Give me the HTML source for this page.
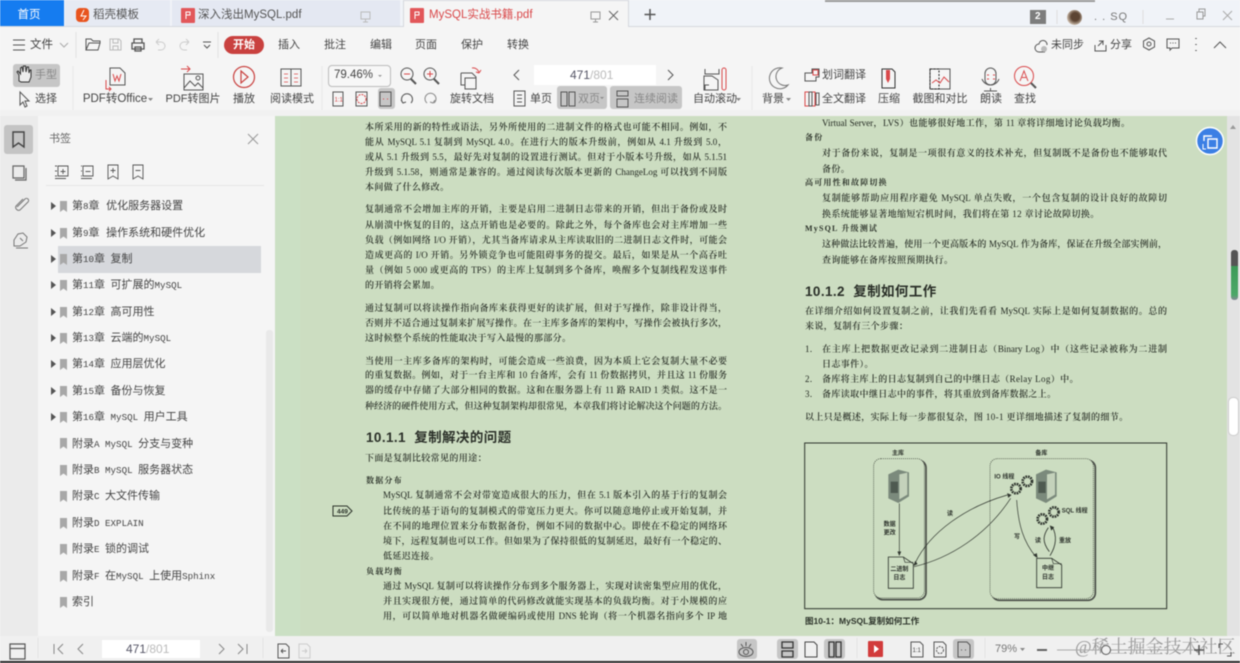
<!DOCTYPE html>
<html lang="zh-CN"><head><meta charset="utf-8"><title>MySQL实战书籍.pdf</title>
<style>
html,body{margin:0;padding:0;background:#f5f5f5}
#r{position:relative;width:1240px;height:663px;overflow:hidden;background:#f5f5f5;font-family:"Liberation Sans","Noto Sans CJK SC",sans-serif;color:#444;filter:blur(.45px)}
#r div{position:absolute;box-sizing:border-box}
.t{white-space:nowrap;font-size:11px;line-height:14px;color:#444}
.c{transform:translateX(-50%)}
.tb{font-size:11.5px;line-height:16px;top:7px;color:#555}
.m{font-size:11px;top:38px;color:#444}
.sel{background:#c6c6c6;border-radius:3px}
.i{left:72px;font-family:"Liberation Mono","Noto Sans CJK SC",monospace;font-size:11px;line-height:16px;color:#444;white-space:nowrap}
.i b{font-weight:400;font-size:9.2px}
.l{font-family:"Liberation Serif","Noto Serif CJK SC",serif;font-size:9px;line-height:14px;height:14px;overflow:hidden;color:#2c332a;font-weight:600;text-align:justify;text-align-last:justify;text-justify:inter-character}
.l i{font-style:normal;font-weight:400;color:#1f251e}
.a{left:365px;width:362px}.b{left:383px;width:344px}
.d{left:805px;width:362px}.e{left:822px;width:345px}
.n{text-align:left;text-align-last:left;letter-spacing:.38px;white-space:nowrap}
.h{font-family:"Liberation Sans","Noto Sans CJK SC",sans-serif;font-size:13.5px;line-height:18px;font-weight:700;color:#2a2f28;white-space:nowrap;letter-spacing:.4px}
.s{font-family:"Liberation Serif","Noto Serif CJK SC",serif;font-size:8px;line-height:12px;font-weight:700;color:#2c332a;white-space:nowrap;letter-spacing:1.2px}
svg{position:absolute;left:0;top:0}
</style></head><body><div id="r">

<div style="left:0;top:0;width:1240px;height:27px;background:#f0f3f8;border-bottom:1px solid #d5d8de"></div>
<div style="left:0;top:0;width:64px;height:26px;background:#157cf0"></div>
<div style="left:65px;top:0;width:105px;height:26px;background:#e6eaf3"></div>
<div style="left:172px;top:0;width:228px;height:26px;background:#e4e8f2"></div>
<div style="left:403px;top:0;width:226px;height:27px;background:#f5f5f5;border:1px solid #d5d8de;border-bottom:0"></div>
<div style="left:825px;top:0;width:270px;height:1.500px;background:#999"></div>
<div class="t c tb" style="left:29px;color:#fff">首页</div>
<div class="t tb" style="left:93px">稻壳模板</div>
<div class="t tb" style="left:198px">深入浅出MySQL.pdf</div>
<div class="t tb" style="left:429px;color:#d9484a">MySQL实战书籍.pdf</div>
<div style="left:1030px;top:10px;width:16px;height:14px;background:#7d7d7d"></div>
<div class="t" style="left:1035px;top:10px;color:#fff;font-size:10px;font-weight:700">2</div>
<div style="left:1067px;top:10px;width:15px;height:15px;border-radius:50%;background:radial-gradient(circle at 55% 45%,#5c4433 0 35%,#c9b9a8 70%)"></div>
<div class="t" style="left:1094px;top:10px;font-size:11px;color:#777;letter-spacing:1px">. . SQ</div>

<div style="left:224px;top:36px;width:40px;height:18px;border-radius:9px;background:#c9413f"></div>
<div class="t c m" style="left:244px;color:#fff;font-weight:700">开始</div>
<div class="t m" style="left:30px;font-size:11.5px">文件</div>
<div class="t c m" style="left:289px">插入</div>
<div class="t c m" style="left:335px">批注</div>
<div class="t c m" style="left:381px">编辑</div>
<div class="t c m" style="left:426px">页面</div>
<div class="t c m" style="left:472px">保护</div>
<div class="t c m" style="left:518px">转换</div>
<div class="t m" style="left:1051px">未同步</div>
<div class="t m" style="left:1110px">分享</div>

<div class="sel" style="left:13px;top:64px;width:47px;height:23px"></div>
<div class="t" style="left:35px;top:68px;color:#888">手型</div>
<div class="t" style="left:35px;top:92px">选择</div>
<div class="t c" style="left:115px;top:92px;font-size:11.5px">PDF转Office</div>
<div class="t c" style="left:193px;top:92px">PDF转图片</div>
<div class="t c" style="left:244px;top:92px">播放</div>
<div class="t c" style="left:292px;top:92px">阅读模式</div>
<div style="left:328px;top:65px;width:63px;height:22px;border:1px solid #bbb;border-radius:4px;background:#f7f7f7"></div>
<div class="t" style="left:334px;top:68px;font-size:11.5px">79.46%</div>
<div class="sel" style="left:378px;top:88px;width:17px;height:21px"></div>
<div class="t c" style="left:472px;top:92px">旋转文档</div>
<div style="left:534px;top:65px;width:122px;height:20px;background:#fff"></div>
<div class="t" style="left:570px;top:68px;font-size:12px"><span style="color:#556">471</span><span style="color:#bbb">/801</span></div>
<div class="t" style="left:530px;top:92px">单页</div>
<div class="sel" style="left:557px;top:86px;width:50px;height:23px"></div>
<div class="t" style="left:578px;top:92px;color:#888">双页</div>
<div class="sel" style="left:610px;top:86px;width:72px;height:23px"></div>
<div class="t" style="left:634px;top:92px;color:#888">连续阅读</div>
<div class="t c" style="left:715px;top:92px">自动滚动</div>
<div class="t" style="left:762px;top:92px">背景</div>
<div class="t" style="left:822px;top:68px">划词翻译</div>
<div class="t" style="left:822px;top:92px">全文翻译</div>
<div class="t c" style="left:889px;top:92px">压缩</div>
<div class="t c" style="left:940px;top:92px">截图和对比</div>
<div class="t c" style="left:991px;top:92px">朗读</div>
<div class="t c" style="left:1025px;top:92px">查找</div>

<div style="left:0;top:110px;width:1240px;height:6px;background:#f1f1f1"></div>
<div style="left:0;top:116px;width:38px;height:520px;background:#ebebeb"></div>
<div style="left:38px;top:116px;width:237px;height:520px;background:#f5f5f5"></div>
<div class="sel" style="left:4px;top:125px;width:29px;height:29px;background:#c4c4c4"></div>
<div class="t" style="left:49px;top:132px;font-size:11px;color:#666">书签</div>
<div style="left:46px;top:185px;width:218px;height:1px;background:#e6e6e6"></div>
<div style="left:58px;top:246px;width:203px;height:27px;background:#d6d8dc"></div>
<div style="left:266px;top:330px;width:7px;height:302px;background:#e9e9e9;border-radius:3px"></div>

<div class="i" style="top:199px">第<b>8</b>章 优化服务器设置</div>
<div class="i" style="top:226px">第<b>9</b>章 操作系统和硬件优化</div>
<div class="i" style="top:252px">第<b>10</b>章<b> </b>复制</div>
<div class="i" style="top:278px">第<b>11</b>章<b> </b>可扩展的<b>MySQL</b></div>
<div class="i" style="top:305px">第<b>12</b>章<b> </b>高可用性</div>
<div class="i" style="top:331px">第<b>13</b>章<b> </b>云端的<b>MySQL</b></div>
<div class="i" style="top:357px">第<b>14</b>章<b> </b>应用层优化</div>
<div class="i" style="top:384px">第<b>15</b>章<b> </b>备份与恢复</div>
<div class="i" style="top:410px">第<b>16</b>章<b> MySQL </b>用户工具</div>
<div class="i" style="top:437px">附录<b>A MySQL </b>分支与变种</div>
<div class="i" style="top:463px">附录<b>B MySQL </b>服务器状态</div>
<div class="i" style="top:489px">附录<b>C </b>大文件传输</div>
<div class="i" style="top:516px">附录<b>D EXPLAIN</b></div>
<div class="i" style="top:542px">附录<b>E </b>锁的调试</div>
<div class="i" style="top:569px">附录<b>F </b>在<b>MySQL </b>上使用<b>Sphinx</b></div>
<div class="i" style="top:595px">索引</div>

<div style="left:275px;top:116px;width:952px;height:520px;background:#ccddc1"></div>
<div style="left:275px;top:116px;width:25px;height:520px;background:#cbe0c4"></div>
<div style="left:1227px;top:116px;width:13px;height:520px;background:#e3e3e3"></div>
<div style="left:1231px;top:250px;width:7px;height:50px;border-radius:3px;background:linear-gradient(#555 0 32%,#3d9a58 32%,#4ca868 90%,#889 100%)"></div>
<div style="left:1228px;top:397px;width:11px;height:39px;border-radius:5px;background:#fff;border:1px solid #ccc"></div>

<div class="l a" style="top:120px">本所采用的新的特性或语法，另外所使用的二进制文件的格式也可能不相同。例如，不</div>
<div class="l a" style="top:135px">能从 <i>MySQL 5.1</i> 复制到 <i>MySQL 4.0</i>。在进行大的版本升级前，例如从 <i>4.1</i> 升级到 <i>5.0</i>，</div>
<div class="l a" style="top:150px">或从 <i>5.1</i> 升级到 <i>5.5</i>，最好先对复制的设置进行测试。但对于小版本号升级，如从 <i>5.1.51</i></div>
<div class="l a" style="top:165px">升级到 <i>5.1.58</i>，则通常是兼容的。通过阅读每次版本更新的 <i>ChangeLog</i> 可以找到不同版</div>
<div class="l a n" style="top:180px">本间做了什么修改。</div>
<div class="l a" style="top:202px">复制通常不会增加主库的开销，主要是启用二进制日志带来的开销，但出于备份或及时</div>
<div class="l a" style="top:218px">从崩溃中恢复的目的，这点开销也是必要的。除此之外，每个备库也会对主库增加一些</div>
<div class="l a" style="top:233px">负载（例如网络 <i>I/O</i> 开销），尤其当备库请求从主库读取旧的二进制日志文件时，可能会</div>
<div class="l a" style="top:248px">造成更高的 <i>I/O</i> 开销。另外锁竞争也可能阻碍事务的提交。最后，如果是从一个高吞吐</div>
<div class="l a" style="top:263px">量（例如 <i>5 000</i> 或更高的 <i>TPS</i>）的主库上复制到多个备库，唤醒多个复制线程发送事件</div>
<div class="l a n" style="top:278px">的开销将会累加。</div>
<div class="l a" style="top:301px">通过复制可以将读操作指向备库来获得更好的读扩展，但对于写操作，除非设计得当，</div>
<div class="l a" style="top:316px">否则并不适合通过复制来扩展写操作。在一主库多备库的架构中，写操作会被执行多次，</div>
<div class="l a n" style="top:331px">这时候整个系统的性能取决于写入最慢的那部分。</div>
<div class="l a" style="top:354px">当使用一主库多备库的架构时，可能会造成一些浪费，因为本质上它会复制大量不必要</div>
<div class="l a" style="top:368px">的重复数据。例如，对于一台主库和 <i>10</i> 台备库，会有 <i>11</i> 份数据拷贝，并且这 <i>11</i> 份服务</div>
<div class="l a" style="top:383px">器的缓存中存储了大部分相同的数据。这和在服务器上有 <i>11</i> 路 <i>RAID 1</i> 类似。这不是一</div>
<div class="l a" style="top:399px">种经济的硬件使用方式，但这种复制架构却很常见，本章我们将讨论解决这个问题的方法。</div>
<div class="h" style="left:366px;top:429px">10.1.1&nbsp; 复制解决的问题</div>
<div class="l a n" style="top:451px">下面是复制比较常见的用途：</div>
<div class="s" style="left:366px;top:475px">数据分布</div>
<div class="l b" style="top:488px"><i>MySQL</i> 复制通常不会对带宽造成很大的压力，但在 <i>5.1</i> 版本引入的基于行的复制会</div>
<div class="l b" style="top:504px">比传统的基于语句的复制模式的带宽压力更大。你可以随意地停止或开始复制，并</div>
<div class="l b" style="top:519px">在不同的地理位置来分布数据备份，例如不同的数据中心。即使在不稳定的网络环</div>
<div class="l b" style="top:534px">境下，远程复制也可以工作。但如果为了保持很低的复制延迟，最好有一个稳定的、</div>
<div class="l b n" style="top:549px">低延迟连接。</div>
<div class="s" style="left:366px;top:566px">负载均衡</div>
<div class="l b" style="top:579px">通过 <i>MySQL</i> 复制可以将读操作分布到多个服务器上，实现对读密集型应用的优化，</div>
<div class="l b" style="top:594px">并且实现很方便，通过简单的代码修改就能实现基本的负载均衡。对于小规模的应</div>
<div class="l b" style="top:609px">用，可以简单地对机器名做硬编码或使用 <i>DNS</i> 轮询（将一个机器名指向多个 <i>IP</i> 地</div>

<div class="l e" style="top:116px;width:308px"><i>Virtual Server</i>，<i>LVS</i>）也能够很好地工作，第 <i>11</i> 章将详细地讨论负载均衡。</div>
<div class="s" style="left:805px;top:132px">备份</div>
<div class="l e" style="top:146px">对于备份来说，复制是一项很有意义的技术补充，但复制既不是备份也不能够取代</div>
<div class="l e n" style="top:162px">备份。</div>
<div class="s" style="left:805px;top:177px">高可用性和故障切换</div>
<div class="l e" style="top:191px">复制能够帮助应用程序避免 <i>MySQL</i> 单点失败，一个包含复制的设计良好的故障切</div>
<div class="l e n" style="top:207px">换系统能够显著地缩短宕机时间，我们将在第 <i>12</i> 章讨论故障切换。</div>
<div class="s" style="left:805px;top:223px">MySQL 升级测试</div>
<div class="l e" style="top:237px">这种做法比较普遍，使用一个更高版本的 <i>MySQL</i> 作为备库，保证在升级全部实例前，</div>
<div class="l e n" style="top:253px">查询能够在备库按照预期执行。</div>
<div class="h" style="left:805px;top:283px">10.1.2&nbsp; 复制如何工作</div>
<div class="l d" style="top:304px">在详细介绍如何设置复制之前，让我们先看看 <i>MySQL</i> 实际上是如何复制数据的。总的</div>
<div class="l d n" style="top:319px">来说，复制有三个步骤：</div>
<div class="l d n" style="top:342px"><i>1.</i></div>
<div class="l e" style="top:342px">在主库上把数据更改记录到二进制日志（<i>Binary Log</i>）中（这些记录被称为二进制</div>
<div class="l e n" style="top:357px">日志事件）。</div>
<div class="l d n" style="top:372px"><i>2.</i></div>
<div class="l e n" style="top:372px">备库将主库上的日志复制到自己的中继日志（<i>Relay Log</i>）中。</div>
<div class="l d n" style="top:387px"><i>3.</i></div>
<div class="l e n" style="top:387px">备库读取中继日志中的事件，将其重放到备库数据之上。</div>
<div class="l d n" style="top:410px">以上只是概述，实际上每一步都很复杂，图 <i>10-1</i> 更详细地描述了复制的细节。</div>
<div class="t" style="left:805px;top:614px;font-size:8.5px;font-weight:700;color:#2c332a">图10-1：MySQL复制如何工作</div>

<div style="left:0;top:636px;width:1240px;height:25px;background:#f0f0f0"></div>
<div style="left:0;top:661px;width:1240px;height:2px;background:#2a2a2a"></div>
<div style="left:102px;top:640px;width:98px;height:18px;background:#fff"></div>
<div class="t" style="left:126px;top:642px;font-size:12px"><span style="color:#556">471</span><span style="color:#bbb">/801</span></div>
<div class="sel" style="left:737px;top:639px;width:20px;height:20px"></div>
<div class="sel" style="left:777px;top:639px;width:21px;height:20px"></div>
<div class="sel" style="left:824px;top:639px;width:21px;height:20px"></div>
<div class="sel" style="left:953px;top:639px;width:21px;height:20px"></div>
<div style="left:868px;top:641px;width:15px;height:16px;background:#d23b3b;border-radius:1px"></div>
<div class="t" style="left:995px;top:642px;font-size:11px;color:#777">79%</div>
<div class="t" style="left:1075px;top:635px;font-family:'Liberation Serif','Noto Serif CJK SC',serif;font-size:18px;line-height:24px;color:#999">@稀土掘金技术社区</div>

<svg width="1240" height="663" fill="none" stroke="#555" stroke-width="1">
 <!-- tabs -->
 <rect x="76" y="8" width="13" height="14" rx="4" fill="#e8541e" stroke="none"/><path d="M84 10l-3 6h5l-3 4" stroke="#fff"/>
 <rect x="181" y="8" width="14" height="15" rx="1" fill="#e2575a" stroke="none"/><path d="M186 19v-7h4v3h-4" stroke="#fff"/>
 <rect x="410" y="8" width="14" height="15" rx="1" fill="#e2575a" stroke="none"/><path d="M415 19v-7h4v3h-4" stroke="#fff"/>
 <path d="M361 12h9v7h-9zM365.500 19v3M363 22h5" stroke="#bbb"/>
 <path d="M591 12h9v7h-9zM595.500 19v3M593 22h5" stroke="#999"/>
 <path d="M609 11l9 9M618 11l-9 9" stroke="#666"/>
 <path d="M650 9v11M644.500 14.500h11" stroke="#555" stroke-width="1.500"/>
 <path d="M1057 10v14M1143 10v14" stroke="#ddd"/>
 <path d="M1166 19h8" stroke="#aaa"/><path d="M1197 12h6v7h-6zM1199 12v-3h6v7h-2" stroke="#999"/><path d="M1223 11l9 9M1232 11l-9 9" stroke="#aaa"/>
 <!-- menu row -->
 <g transform="translate(0,-8)">
 <path d="M13 48h12M13 53h12M13 58h12"/><path d="M60 51l4 4 4-4" stroke="#aaa"/><path d="M76 40v26M218 40v26" stroke="#e3e3e3"/>
 <path d="M86 58v-11h5l2 2h7v2h-11l-3 7h12l2-7h-1"/>
 <path d="M110 47h9l2 2v9h-11zM113 47v4h5v-4M113 58v-4h5v4" stroke="#bbb"/>
 <path d="M134 51v-4h8v4M132 51h12v6h-12zM135 55h6v4h-6z" stroke-width="1.300"/>
 <path d="M156 50h5a4 4 0 0 1 0 8h-3M156 50l3-3M156 50l3 3" stroke="#ccc"/><path d="M189 50h-5a4 4 0 0 0 0 8h3M189 50l-3-3M189 50l-3 3" stroke="#ccc"/>
 <path d="M203 50h8M204 53l3 3 3-3"/>
 <path d="M1047 53a4 4 0 0 0-8-1a4 4 0 0 0 0 8h6" /><circle cx="1044" cy="57" r="3" fill="#bbb" stroke="none"/>
 <path d="M1095 53v6h11v-6M1098 54l5-5h-4M1103 49v4"/>
 <path d="M1149 46l5.500 3v6l-5.500 3-5.500-3v-6z"/><circle cx="1149" cy="52" r="2"/>
 <path d="M1167 47h12v9h-7l-2 2v-2h-3z"/><path d="M1170 51h6" stroke-dasharray="1 1.500"/>
 <path d="M1196 46v1M1196 52v1M1196 58v1" stroke-width="1.500"/><path d="M1214 56l6-6 6 6"/>
 </g>
 <!-- toolbar left -->
 <path d="M19 81v-6l-2-3 1-1 2.500 3v-6l1.500-1 1 5 .5-6h2l.5 6 1-5h1.500l.5 6 1-3h1v7l-2 5h-8z" fill="#eee" stroke="#333"/>
 <path d="M20 92v13l3-3 2 5 2-1-2-5h4z"/>
 <path d="M73 66v44M322 66v44M752 66v44" stroke="#e8e8e8"/>
 <path d="M110 68h10l5 5v12h-15z"/><path d="M113 74l2 7 2-5 2 5 2-7" stroke="#d9484a"/><path d="M106 80v9h5M109 87l2 2-2 2" stroke="#d9484a"/>
 <path d="M184 74h19v16h-19z"/><path d="M184 88l6-7 5 5 3-3 5 5"/><circle cx="198" cy="78" r="2"/><path d="M181 69h9M187 66l3 3-3 3" stroke="#d9484a"/>
 <circle cx="244" cy="77" r="10.500" stroke="#c9413f" stroke-width="1.200"/><path d="M241 71l7 6-7 6z" stroke="#c9413f" stroke-width="1.200"/>
 <path d="M281 69h10v17h-10zM291 69h10v17h-10z"/><path d="M284 74h4M284 78h4M284 82h4M294 74h4M294 78h4M294 82h4" stroke="#d9484a" stroke-width=".8"/>
 <path d="M382 75l-2 2-2-2" fill="#999" stroke="none"/>
 <circle cx="407" cy="74" r="6"/><path d="M411 79l5 5" stroke-width="2"/><path d="M404 74h6" stroke="#d9484a"/>
 <circle cx="430" cy="74" r="6"/><path d="M434 79l5 5" stroke-width="2"/><path d="M427 74h6M430 71v6" stroke="#d9484a"/>
 <path d="M333 92h10v14h-10zM356 92h11v14h-11zM380 92h11v14h-11z"/>
 <text x="334.500" y="101.500" font-size="6" fill="#d9484a" stroke="none" font-family="Liberation Sans">1:1</text><circle cx="361.500" cy="99" r="4.500" stroke="#d9484a" stroke-dasharray="2 1"/><path d="M383 99h1M387 99h1" stroke="#d9484a"/>
 <path d="M403 103a5.500 5.500 0 1 1 8 0M401 100l2 3 3-1"/><path d="M427 103a5.500 5.500 0 1 1 7 0M435 100l-2 3-3-1" stroke="#888"/>
 <path d="M461 73h11l4 4v8"/><path d="M465 78h11v11h-11zM461 73v12h4"/><path d="M472 68a6 6 0 0 1 7 5M479 73l2-3M479 73l-3-1" stroke="#d9484a"/>
 <path d="M519 70l-5 5 5 5M668 70l5 5-5 5"/>
 <path d="M514 91h11v15h-11zM517 95h5M517 98.500h5M517 102h5"/>
 <path d="M561 92h6v14h-6zM569 92h6v14h-6z"/><path d="M600 97l2 2 2-2" fill="#888" stroke="none"/>
 <path d="M617 91h11v5h-11zM617 99h11v8h-11z"/>
 <!-- right toolbar -->
 <path d="M705 69v5h14v-5M705 90v-5h4M712 76h-8v14h14v-10z"/><rect x="722" y="68" width="4" height="22" rx="2" stroke="#d9484a"/>
 <path d="M782 68a10.500 10.500 0 1 0 6 17a9 9 0 0 1-6-17z" stroke="#777"/>
 <path d="M805 73h7v-4h7v8h-3v4h-11z"/><path d="M813 70h5v5h-5z" stroke="#d9484a"/>
 <path d="M805 92h10v14h-10z" stroke="#d9484a"/><path d="M809 92h3v14h-3z"/><path d="M816 93h3v12h-3z"/>
 <path d="M882 69h10l3 3v16h-13z" stroke="#333"/><path d="M886 70h4v9l-2 4-2-4z" fill="#d9484a" stroke="none"/>
 <path d="M930 69h20v20h-20z"/><path d="M930 69h9v20h-9z" stroke="#222" stroke-dasharray="2 1.500"/><path d="M932 83l4-3 4 3 4-6 5 5" stroke="#d9484a"/>
 <rect x="985" y="68" width="11" height="17" rx="5.500"/><path d="M982 79a9 9 0 0 0 17 0M990.500 88v3M984 91h13"/><path d="M987 75h2M993 75h2M987 79h2M993 79h2" stroke="#d9484a"/>
 <circle cx="1024" cy="76" r="9.500" stroke="#d9484a"/><path d="M1031 83l5 5" stroke-width="2"/><path d="M1020 81l4-10 4 10M1022 77.500h4" stroke="#d9484a"/>
 <path d="M148 98h5l-2.500 3zM786 98h5l-2.500 3zM736 98h5l-2.500 3z" fill="#888" stroke="none"/>
 <!-- sidebar -->
 <path d="M13 132h11v15l-5.500-4-5.500 4z" stroke="#444" stroke-width="1.400"/>
 <path d="M13 166h11v12h-11zM15 180h11v-12" stroke="#666" stroke-width="1.200"/>
 <path d="M23 199l-7 7a3 3 0 0 0 4 4l8-8a2 2 0 0 0-3-3l-8 8" stroke="#777"/>
 <path d="M14 240l4-6 5-1 4 4-1 5-6 4h-6zM20 238l3 3M16 248h12" stroke="#777"/>
 <path d="M248 134l10 10M258 134l-10 10" stroke="#999"/>
 <path d="M58 166h10v10h-10zM63 169v5M60.500 171.500h5M55 166h2M55 171h2M55 176h2M55 178.500h11" stroke-width=".9" /><path d="M83 166h10v10h-10zM85.500 171.500h5M81 166h1M81 171h1M81 176h1M81 178.500h11" stroke-width=".9"/>
 <path d="M108 165h10v14l-5-3-5 3zM113 168v5M110.500 170.500h5" stroke-width=".9"/><path d="M133 165h10v14l-5-3-5 3zM135.500 170.500h5" stroke-width=".9"/>
 <g fill="#555" stroke="none">
  <path d="M51 202l5 4-5 4zM51 229l5 4-5 4zM51 255l5 4-5 4zM51 281l5 4-5 4zM51 308l5 4-5 4zM51 334l5 4-5 4zM51 360l5 4-5 4zM51 387l5 4-5 4zM51 413l5 4-5 4z"/>
 </g>
 <g fill="#a8a8a8" stroke="none">
  <path d="M60 201h7v11l-3.500-2.500-3.500 2.500zM60 228h7v11l-3.500-2.500-3.500 2.500zM60 254h7v11l-3.500-2.500-3.500 2.500zM60 280h7v11l-3.500-2.500-3.500 2.500zM60 307h7v11l-3.500-2.500-3.500 2.500zM60 333h7v11l-3.500-2.500-3.500 2.500zM60 359h7v11l-3.500-2.500-3.500 2.500zM60 386h7v11l-3.500-2.500-3.500 2.500zM60 412h7v11l-3.500-2.500-3.500 2.500zM60 438h7v11l-3.500-2.500-3.500 2.500zM60 465h7v11l-3.500-2.500-3.500 2.500zM60 491h7v11l-3.500-2.500-3.500 2.500zM60 518h7v11l-3.500-2.500-3.500 2.500zM60 544h7v11l-3.500-2.500-3.500 2.500zM60 571h7v11l-3.500-2.500-3.500 2.500zM60 597h7v11l-3.500-2.500-3.500 2.500z"/>
 </g>
 <!-- right float & scrollbar -->
 <path d="M1230 129l3-4 3 4z" fill="#999" stroke="none"/>
 <circle cx="1210" cy="141" r="13.500" fill="#3b7fe4" stroke="#fff" stroke-width="1.500"/>
 <path d="M1204 141v-5h8M1208 139h9v9h-9z" stroke="#fff" stroke-width="1.400"/><path d="M1203 144v5h3" stroke="#fff"/>
 <!-- margin marker -->
 <path d="M333 506h14l5 5-5 5h-14z" stroke="#2c332a" stroke-width="1"/>
 <text x="337" y="513.500" font-size="6.500" font-family="Liberation Sans" fill="#2c332a" stroke="none" font-weight="700">449</text>
 <!-- bottom -->
 <path d="M10 644h15v15h-15zM10 648.500h15" stroke-width="1.200"/><path d="M38 638v20M263 638v20M857 638v20M985 638v20" stroke="#e2e2e2"/>
 <path d="M54 644v10M63 644l-5 5 5 5M83 644l-5 5 5 5" stroke="#888"/>
 <path d="M219 644l5 5-5 5M238 644l5 5-5 5M247 644v10" stroke="#888"/>
 <path d="M278 644h8l3 3v11h-11zM281 651h5M281 651l2-2M281 651l2 2"/>
 <path d="M299 644h8l3 3v11h-11zM302 651h5M307 651l-2-2M307 651l-2 2" stroke="#ccc"/>
 <ellipse cx="746" cy="652" rx="7" ry="4.500"/><circle cx="746" cy="652" r="2.500"/><path d="M741 644l2 3M746 642v4M751 644l-2 3"/>
 <path d="M782 642h11v6h-11zM782 651h11v6h-11z" stroke="#333" stroke-width="1.300"/>
 <path d="M805 642h9l3 3v12h-12z" stroke="#444"/>
 <path d="M829 642h5v15h-5zM836 642h5v15h-5z" stroke="#333" stroke-width="1.300"/>
 <path d="M874 645l5 4-5 4z" fill="#fff" stroke="none"/>
 <path d="M911 642h9l3 3v12h-12zM934 642h9l3 3v12h-12zM958 642h9l3 3v12h-12z"/>
 <text x="912.500" y="652" font-size="6" fill="#444" stroke="none" font-family="Liberation Sans">1:1</text><circle cx="940" cy="650" r="3.500" stroke-dasharray="2 1"/><path d="M961 650h1M965 650h1"/>
 <path d="M1020 648h5l-2.500 3z" fill="#888" stroke="none"/>
 <path d="M1037 650h10" stroke="#555" stroke-width="1.800"/><path d="M1057 650h136" stroke="#aaa"/><circle cx="1106" cy="650" r="4.500" fill="#f0f0f0"/>
 <path d="M1199 645v10M1194 650h10" stroke="#555" stroke-width="1.500"/>
 <path d="M1219 648v-4h4M1231 652v4h-4" stroke="#555"/>
 <!-- figure -->
 <svg x="800" y="435" width="380" height="195" viewBox="0 0 1140 585" stroke="#2f352e">
  <rect x="14" y="24" width="1086" height="497" stroke-width="3"/>
  <rect x="226" y="76" width="152" height="418" rx="22" stroke="#4a4f48" stroke-width="5"/>
  <rect x="221" y="71" width="152" height="418" rx="22" fill="#ccddc1" stroke-width="2" stroke-dasharray="3 3"/>
  <rect x="576" y="76" width="310" height="420" rx="22" stroke="#4a4f48" stroke-width="5"/>
  <rect x="570" y="71" width="310" height="420" rx="22" fill="#ccddc1" stroke-width="2" stroke-dasharray="3 3"/>
  <g stroke="none" fill="#7b8a7c"><path d="M265 118l30-14 32 8v72l-32 20-30-14z"/><path d="M708 118l30-14 32 8v72l-32 20-30-14z"/></g>
  <g stroke="none" fill="#4e5a50"><path d="M272 140h22v34h-22zM715 140h22v34h-22z"/></g>
  <g stroke="none" fill="#c4d2bb"><path d="M298 118l24-5v66l-24 14zM741 118l24-5v66l-24 14z"/></g>
  <g fill="none" stroke="#2f352e">
   <circle cx="648" cy="161" r="14" stroke-width="8" stroke-dasharray="5 2.500"/><circle cx="682" cy="139" r="14" stroke-width="8" stroke-dasharray="5 2.500"/>
   <circle cx="727" cy="252" r="14" stroke-width="8" stroke-dasharray="5 2.500"/><circle cx="762" cy="231" r="14" stroke-width="8" stroke-dasharray="5 2.500"/>
  </g>
  <path d="M298 205v152" stroke-width="2"/><path d="M293 350l5 12 5-12z" fill="#2f352e"/>
  <path d="M265 366h45l30 20v74h-75z" fill="#ccddc1" stroke-width="2.500"/><path d="M310 366l5 16h25" stroke-width="2"/>
  <path d="M710 370h45l30 20v68h-75z" fill="#ccddc1" stroke-width="2.500"/><path d="M755 370l5 16h25" stroke-width="2"/>
  <path d="M345 385C390 290 500 215 622 180" stroke-width="2"/><path d="M342 395C450 370 560 300 632 190" stroke-width="2"/>
  <path d="M622 175l12 5-9 8z" fill="#2f352e"/><path d="M346 378l-5 14 11-5z" fill="#2f352e"/>
  <path d="M650 195C655 270 670 320 708 366" stroke-width="2"/><path d="M700 360l12 8-2-13z" fill="#2f352e"/>
  <path d="M748 350C725 320 730 300 745 278" stroke-width="2.500"/><path d="M750 362C770 330 770 300 757 275" stroke-width="2.500"/><path d="M750 272l12 5-8 9z" fill="#2f352e"/>
  <g font-family="Liberation Sans,Noto Sans CJK SC,sans-serif" font-size="18" font-weight="700" fill="#2f352e" stroke="none" text-anchor="middle">
   <text x="294" y="60">主库</text><text x="724" y="60">备库</text>
   <text x="269" y="273">数据</text><text x="269" y="299">更改</text>
   <text x="613" y="130">IO 线程</text><text x="824" y="233">SQL 线程</text>
   <text x="450" y="242">读</text><text x="651" y="310">写</text><text x="714" y="322">读</text><text x="795" y="322">重放</text>
   <text x="298" y="408">二进制</text><text x="298" y="434">日志</text>
   <text x="744" y="405">中继</text><text x="744" y="432">日志</text>
  </g>
 </svg>
</svg>
</div></body></html>
